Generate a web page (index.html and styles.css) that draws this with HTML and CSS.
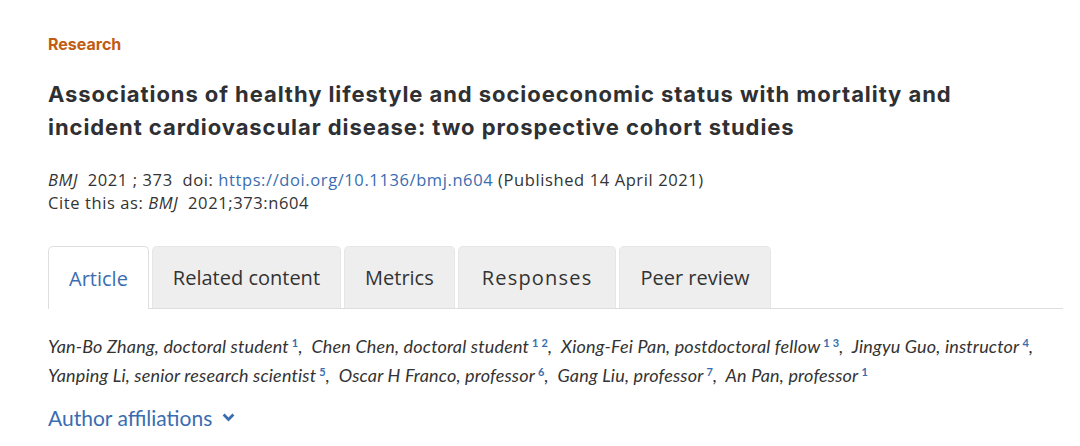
FILE: index.html
```html
<!DOCTYPE html>
<html lang="en">
<head>
<meta charset="utf-8">
<title>BMJ article</title>
<link rel="stylesheet" href="styles.css">
</head>
<body>
<main class="article">
  <div class="section-label">Research</div>
  <h1 class="title">Associations of healthy lifestyle and socioeconomic status with mortality and<br>incident cardiovascular disease: two prospective cohort studies</h1>
  <div class="meta">
    <div class="meta-line"><i>BMJ</i>&nbsp; 2021 ; 373 &nbsp;doi: <a class="link" href="#">https://doi.org/10.1136/bmj.n604</a> (Published 14 April 2021)</div>
    <div class="meta-line">Cite this as: <i>BMJ</i>&nbsp; 2021;373:n604</div>
  </div>
  <nav class="tabs">
    <a class="tab active" href="#">Article</a>
    <a class="tab" href="#">Related content</a>
    <a class="tab" href="#">Metrics</a>
    <a class="tab tab-wide" href="#">Responses</a>
    <a class="tab" href="#">Peer review</a>
  </nav>
  <p class="authors">
    Yan-Bo Zhang, doctoral student<sup>1</sup>,&nbsp; Chen Chen, doctoral student<sup>1 2</sup>,&nbsp; Xiong-Fei Pan, postdoctoral fellow<sup>1 3</sup>,&nbsp; Jingyu Guo, instructor<sup>4</sup>,<br>
    Yanping Li, senior research scientist<sup>5</sup>,&nbsp; Oscar H Franco, professor<sup>6</sup>,&nbsp; Gang Liu, professor<sup>7</sup>,&nbsp; An Pan, professor<sup>1</sup>
  </p>
  <a class="affiliations" href="#">Author affiliations
    <svg class="chev" width="13" height="9" viewBox="0 0 13 9"><path d="M1.6 1.6 L6.5 6.5 L11.4 1.6" fill="none" stroke="#3a6db0" stroke-width="2.8"/></svg>
  </a>
</main>
</body>
</html>
```

FILE: styles.css
```css
* { box-sizing: border-box; }
body {
  margin: 0;
  background: #fff;
  font-family: "Open Sans", "Liberation Sans", sans-serif;
  color: #333;
}
.article {
  padding: 33px 17px 0 48px;
}
.section-label {
  font-family: Inter, "Liberation Sans", sans-serif;
  font-weight: 700;
  font-size: 16px;
  line-height: 22px;
  color: #c15c12;
}
.title {
  margin: 23px 0 0;
  font-family: Inter, "Liberation Sans", sans-serif;
  font-weight: 700;
  font-size: 22px;
  line-height: 33px;
  letter-spacing: 0.93px;
  color: #2f3033;
}
.meta {
  margin-top: 24px;
  font-size: 16.5px;
  line-height: 23px;
  letter-spacing: 0.6px;
  color: #333;
}
.link { color: #3a6db0; text-decoration: none; }
.tabs {
  display: flex;
  gap: 3px;
  margin-top: 32px;
  border-bottom: 1px solid #dedede;
  height: 63px;
}
.tab {
  display: flex;
  align-items: center;
  padding: 0 20px;
  height: 62px;
  background: #eeeeee;
  border: 1px solid #e6e6e6;
  border-bottom: none;
  border-radius: 5px 5px 0 0;
  font-size: 20px;
  color: #333;
  text-decoration: none;
}
.tab-wide {
  padding: 0 23px;
  letter-spacing: 1.2px;
}
.tab.active {
  background: #fff;
  border-color: #dedede;
  color: #3a6db0;
  height: 63px;
  margin-bottom: -1px;
}
.authors {
  margin: 23px 0 0;
  font-family: Lato, "Open Sans", sans-serif;
  font-style: italic;
  font-size: 18px;
  line-height: 29px;
  letter-spacing: 0.17px;
  color: #333;
}
.authors sup {
  font-style: normal;
  font-weight: 700;
  font-size: 11px;
  color: #3a6db0;
  margin-left: 3px;
  vertical-align: 6px;
  line-height: 0;
}
.affiliations {
  display: inline-flex;
  align-items: center;
  gap: 10px;
  margin-top: 15px;
  font-family: Lato, "Open Sans", sans-serif;
  font-size: 21px;
  color: #3a6db0;
  text-decoration: none;
}
```
